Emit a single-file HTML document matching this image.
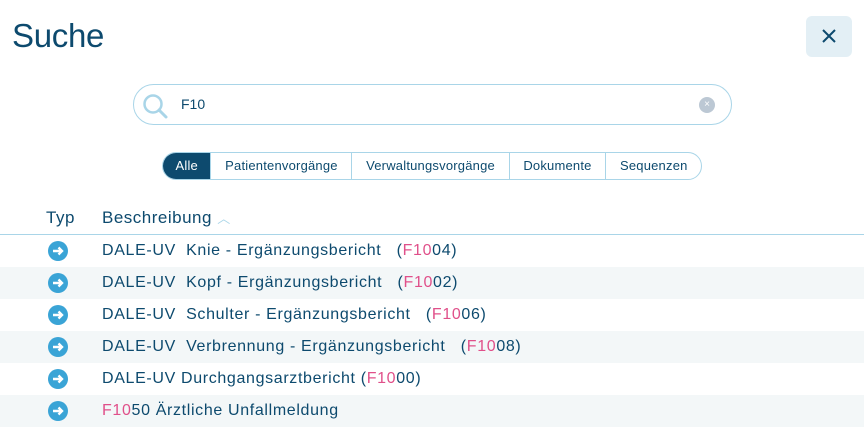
<!DOCTYPE html>
<html><head><meta charset="utf-8"><style>
*{margin:0;padding:0;box-sizing:border-box}
body{width:864px;height:442px;background:#fff;font-family:"Liberation Sans",sans-serif;color:#0d4a6e;position:relative;overflow:hidden}
.t{position:absolute;left:12px;top:17px;font-size:33px;color:#0d4a6e;letter-spacing:-0.3px}
.x{position:absolute;left:806px;top:16px;width:46px;height:41px;background:#e3eff5;border-radius:6px}
.s{position:absolute;left:133px;top:84px;width:599px;height:41px;border:1px solid #a9d5e8;border-radius:21px}
.s .v{position:absolute;left:47px;top:11px;font-size:14px;color:#0d4a6e}
.cl{position:absolute;left:565px;top:12px;width:16px;height:16px;border-radius:50%;background:#bcc8d4;color:#fff;font-size:10px;text-align:center;line-height:16px}
.tabs{position:absolute;left:162px;top:152px;height:28px;border:1px solid #a9d5e8;border-radius:14px;display:flex;overflow:hidden;font-size:13px;letter-spacing:0.2px}
.tabs div{padding:0 11px 0 11px;line-height:26px;border-left:1px solid #a9d5e8;color:#0d4a6e;padding:0 13.7px}
.tabs div:first-child{border-left:none;background:#0d4a6e;color:#fff;padding:0 12.5px}
.h{position:absolute;top:208px;font-size:17px;color:#0d4a6e;letter-spacing:0.5px}
.line{position:absolute;left:0;top:234px;width:864px;height:1px;background:#a9d5e8}
.r{position:absolute;left:0;width:864px;height:32px;font-size:16px;line-height:32px;letter-spacing:0.65px}
.r.g{background:#f3f7f8}
.r span.d{position:absolute;left:102px;white-space:pre}
.ic{position:absolute;left:48px;top:6px;width:20px;height:20px;border-radius:50%;background:#3aa4d6}
.p{color:#e0508a}
</style></head><body>
<div class="t">Suche</div>
<div class="x"><svg width="46" height="41"><path d="M17 14L29 26M29 14L17 26" stroke="#0d4a6e" stroke-width="2"/></svg></div>
<div class="s">
<svg style="position:absolute;left:7px;top:7px" width="30" height="30"><circle cx="12" cy="12" r="8.5" stroke="#a9d5e8" stroke-width="2.5" fill="none"/><path d="M18 18L25 25" stroke="#a9d5e8" stroke-width="3" stroke-linecap="round"/></svg>
<div class="v">F10</div><div class="cl">×</div></div>
<div class="tabs"><div>Alle</div><div>Patientenvorgänge</div><div>Verwaltungsvorgänge</div><div>Dokumente</div><div>Sequenzen</div></div>
<div class="h" style="left:46px">Typ</div>
<div class="h" style="left:102px">Beschreibung <span style="color:#a9d5e8;font-size:13px">︿</span></div>
<div class="line"></div>
<div class="r" style="top:235px"><div class="ic"><svg width="20" height="20"><path d="M5 10H14M10.5 6.5L14 10L10.5 13.5" stroke="#fff" stroke-width="2.4" fill="none"/></svg></div><span class="d">DALE-UV  Knie - Ergänzungsbericht   (<span class="p">F10</span>04)</span></div>
<div class="r g" style="top:267px"><div class="ic"><svg width="20" height="20"><path d="M5 10H14M10.5 6.5L14 10L10.5 13.5" stroke="#fff" stroke-width="2.4" fill="none"/></svg></div><span class="d">DALE-UV  Kopf - Ergänzungsbericht   (<span class="p">F10</span>02)</span></div>
<div class="r" style="top:299px"><div class="ic"><svg width="20" height="20"><path d="M5 10H14M10.5 6.5L14 10L10.5 13.5" stroke="#fff" stroke-width="2.4" fill="none"/></svg></div><span class="d">DALE-UV  Schulter - Ergänzungsbericht   (<span class="p">F10</span>06)</span></div>
<div class="r g" style="top:331px"><div class="ic"><svg width="20" height="20"><path d="M5 10H14M10.5 6.5L14 10L10.5 13.5" stroke="#fff" stroke-width="2.4" fill="none"/></svg></div><span class="d">DALE-UV  Verbrennung - Ergänzungsbericht   (<span class="p">F10</span>08)</span></div>
<div class="r" style="top:363px"><div class="ic"><svg width="20" height="20"><path d="M5 10H14M10.5 6.5L14 10L10.5 13.5" stroke="#fff" stroke-width="2.4" fill="none"/></svg></div><span class="d">DALE-UV Durchgangsarztbericht (<span class="p">F10</span>00)</span></div>
<div class="r g" style="top:395px"><div class="ic"><svg width="20" height="20"><path d="M5 10H14M10.5 6.5L14 10L10.5 13.5" stroke="#fff" stroke-width="2.4" fill="none"/></svg></div><span class="d"><span class="p">F10</span>50 Ärztliche Unfallmeldung</span></div>
</body></html>
